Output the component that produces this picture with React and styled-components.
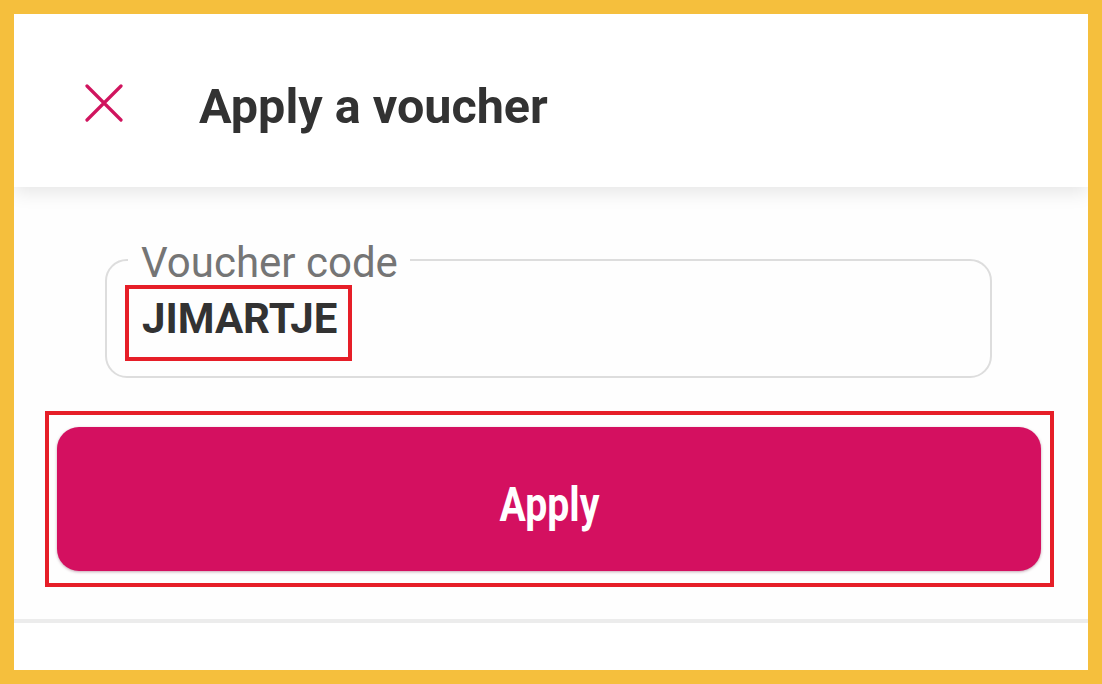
import React from "react";
import styled, { createGlobalStyle } from "styled-components";

const GlobalStyle = createGlobalStyle`
  html, body { margin: 0; padding: 0; }
  body {
    background: #f5bf3d;
    font-family: Roboto, "Noto Sans", "Liberation Sans", sans-serif;
  }
  * { box-sizing: border-box; }
`;

const Frame = styled.div`
  width: 1102px;
  height: 684px;
  padding: 14px;
`;

const Panel = styled.div`
  height: 100%;
  background: #ffffff;
  display: flex;
  flex-direction: column;
  overflow: hidden;
`;

const Header = styled.header`
  position: relative;
  z-index: 1;
  flex: 0 0 173px;
  display: flex;
  align-items: center;
  gap: 76px;
  padding: 4px 0 0 71px;
  background: #ffffff;
  box-shadow: 0 5px 18px rgba(0, 0, 0, 0.1);
`;

const CloseButton = styled.button`
  width: 38px;
  height: 38px;
  padding: 0;
  border: none;
  background: none;
  display: flex;
  cursor: pointer;
`;

const Title = styled.h1`
  margin: 8px 0 0 0;
  font-size: 48.5px;
  font-weight: 700;
  color: #323232;
`;

const Body = styled.main`
  flex: 1;
  background: #fefefe;
  padding: 45px 34px 0 31px;
  display: flex;
  flex-direction: column;
`;

const Field = styled.fieldset`
  margin: 0 62px 0 60px;
  padding: 0 16px 15px 18px;
  border: 2px solid #dddddd;
  border-radius: 22px;
  min-width: 0;
`;

const Legend = styled.legend`
  margin-left: 3px;
  padding: 7px 12px 0 13px;
  font-size: 42px;
  line-height: 48px;
  font-weight: 400;
  color: #757575;
`;

const Highlight = styled.div`
  border: 4px solid #e61e28;
  display: ${(p) => (p.$block ? "block" : "inline-block")};
`;

const ValueBox = styled(Highlight)`
  margin-top: -2px;
  padding: 5px 11px 13px 13px;
`;

const Value = styled.div`
  font-size: 42px;
  line-height: 50px;
  font-weight: 700;
  color: #323232;
  white-space: nowrap;
`;

const ButtonBox = styled(Highlight)`
  margin-top: 33px;
  padding: 12px 9px 12px 8px;
`;

const ApplyButton = styled.button`
  width: 100%;
  height: 144px;
  border: none;
  border-radius: 22px;
  background: #d41060;
  box-shadow: 0 1px 3px rgba(90, 0, 40, 0.35);
  display: flex;
  align-items: center;
  justify-content: center;
  padding: 10px 0 0 0;
  cursor: pointer;
  font-family: inherit;
`;

const ButtonLabel = styled.span`
  display: inline-block;
  font-size: 49px;
  line-height: 49px;
  font-weight: 700;
  color: #ffffff;
  transform: scaleX(0.8);
`;

const Divider = styled.div`
  flex: 0 0 4px;
  background: #ececec;
`;

const Footer = styled.footer`
  flex: 0 0 47px;
  background: #ffffff;
`;

const CloseIcon = () => (
  <svg width="38" height="38" viewBox="0 0 38 38" fill="none">
    <path
      d="M2 2 L36 36 M36 2 L2 36"
      stroke="#d0145e"
      strokeWidth="3.2"
      strokeLinecap="round"
    />
  </svg>
);

export default function App() {
  return (
    <>
      <GlobalStyle />
      <Frame>
        <Panel>
          <Header>
            <CloseButton aria-label="Close">
              <CloseIcon />
            </CloseButton>
            <Title>Apply a voucher</Title>
          </Header>
          <Body>
            <Field>
              <Legend>Voucher code</Legend>
              <ValueBox>
                <Value>JIMARTJE</Value>
              </ValueBox>
            </Field>
            <ButtonBox $block>
              <ApplyButton>
                <ButtonLabel>Apply</ButtonLabel>
              </ApplyButton>
            </ButtonBox>
          </Body>
          <Divider />
          <Footer />
        </Panel>
      </Frame>
    </>
  );
}
